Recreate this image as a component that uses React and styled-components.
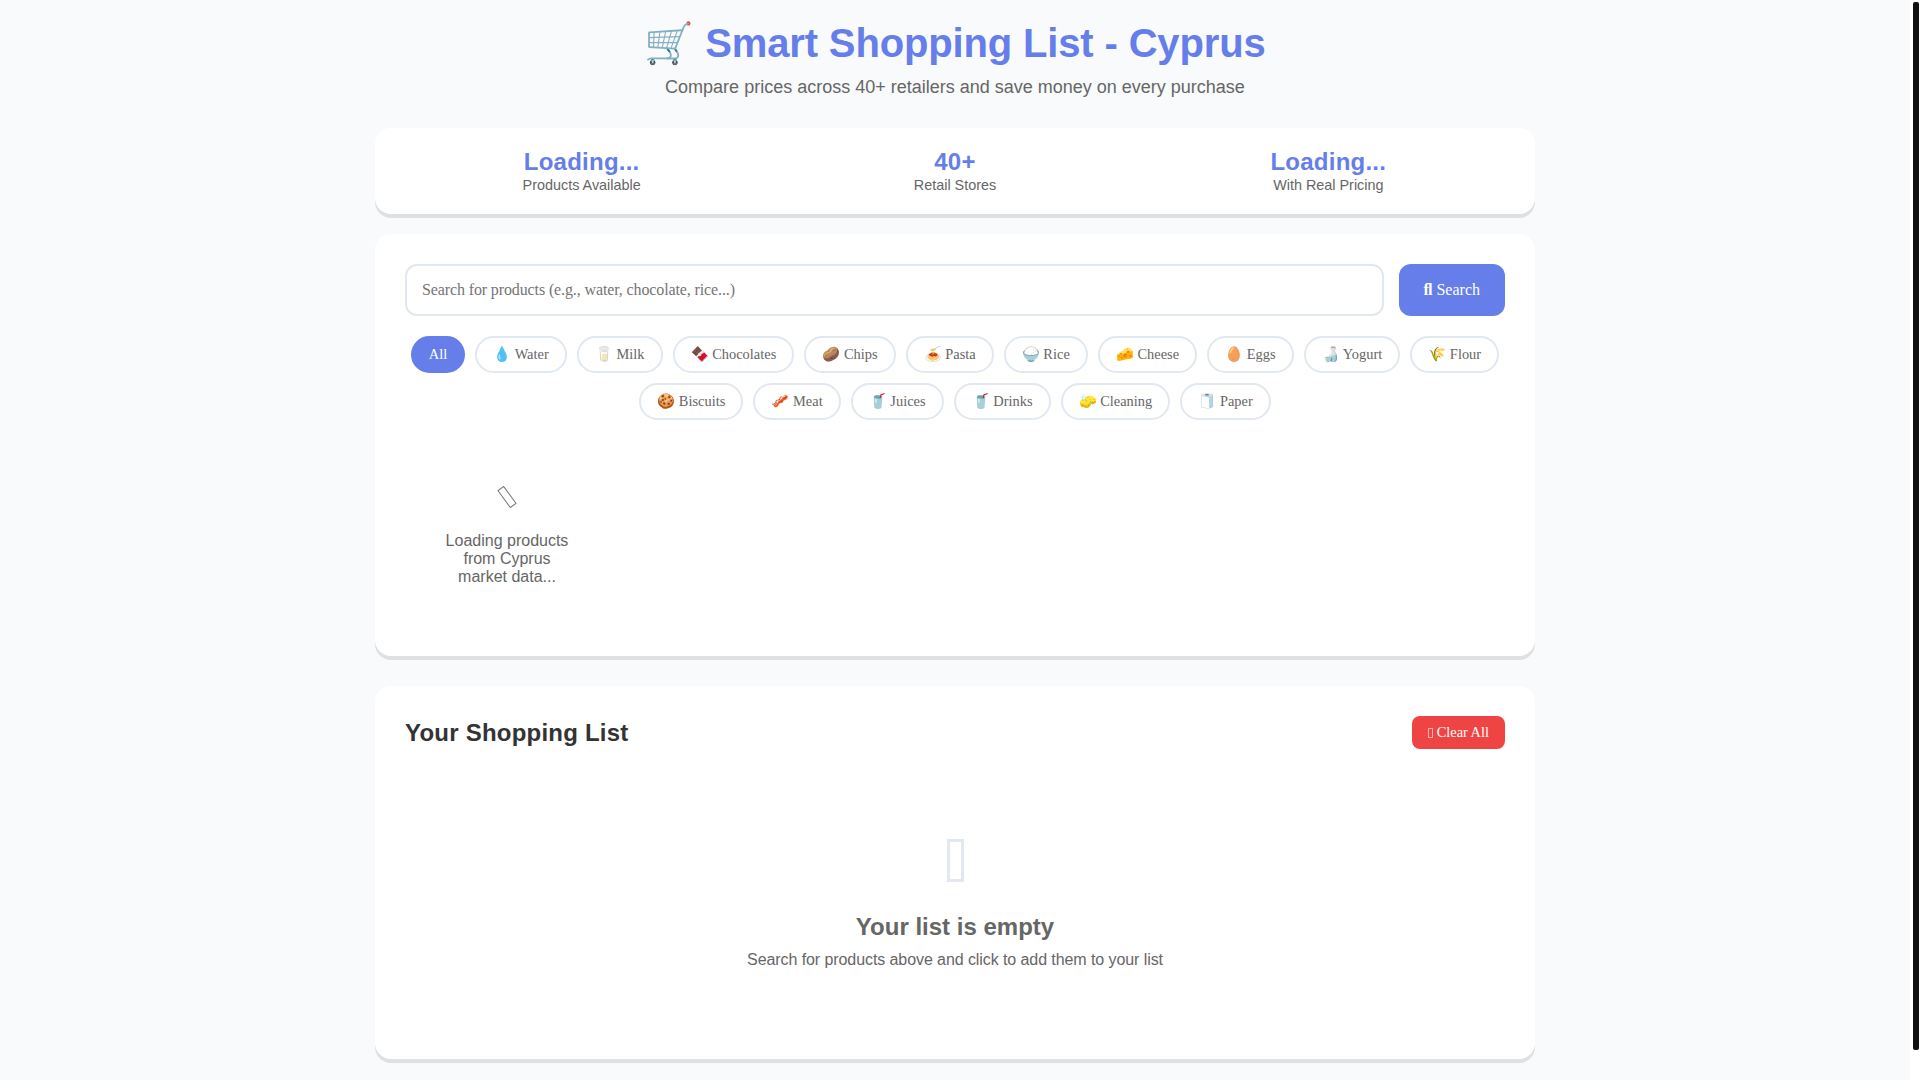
import styled, { createGlobalStyle } from "styled-components";

const GlobalStyle = createGlobalStyle`
  * {
    box-sizing: border-box;
    margin: 0;
    padding: 0;
  }

  html, body {
    height: 100%;
    overflow: hidden;
  }

  body {
    font-family: "Liberation Sans", Arial, sans-serif;
    background: #f8fafc;
    color: #333;
  }
`;

const Shell = styled.div`
  display: flex;
  height: 100vh;
`;

const Page = styled.div`
  flex: 1;
  min-width: 0;
  overflow: hidden;
`;

const ScrollRail = styled.div`
  flex: none;
  width: 10px;
  padding: 2px 1px 30px 3px;
  background: #fff;
`;

const ScrollThumb = styled.div`
  height: 100%;
  background: #111;
  border-radius: 2px;
`;

const Container = styled.div`
  max-width: 1200px;
  margin: 0 auto;
  padding: 20px;
`;

const Header = styled.header`
  text-align: center;
  margin-bottom: 30px;
`;

const Title = styled.h1`
  font-size: 40px;
  font-weight: 700;
  color: #667eea;
  margin-bottom: 10px;
  letter-spacing: -0.15px;
`;

const Subtitle = styled.p`
  font-size: 18px;
  color: #666;
`;

const Card = styled.section`
  background: #fff;
  border-radius: 16px;
  box-shadow: 0 4px 0 rgba(0, 0, 0, 0.1);
`;

const StatsCard = styled(Card)`
  display: grid;
  grid-template-columns: repeat(3, 1fr);
  padding: 20px 20px 21px;
  margin-bottom: 20px;
`;

const Stat = styled.div`
  text-align: center;
`;

const StatValue = styled.div`
  font-size: 24px;
  font-weight: 700;
  color: #667eea;
  margin-bottom: 1px;
  letter-spacing: 0.24px;
`;

const StatLabel = styled.div`
  font-size: 14.4px;
  color: #666;
`;

const SearchCard = styled(Card)`
  padding: 30px;
  margin-bottom: 30px;
`;

const SearchRow = styled.div`
  display: flex;
  gap: 15px;
  margin-bottom: 20px;
`;

const SearchInput = styled.input`
  flex: 1;
  padding: 15px;
  border: 2px solid #e2e8f0;
  border-radius: 12px;
  font-family: "Liberation Serif", "Times New Roman", serif;
  font-size: 16px;
  background: #fff;
  outline: none;

  &::placeholder {
    letter-spacing: -0.12px;
  }
`;

const SearchButton = styled.button`
  padding: 0 25px;
  border: none;
  border-radius: 12px;
  background: #667eea;
  color: #fff;
  font-family: "Liberation Serif", "Times New Roman", serif;
  font-size: 16px;
`;

const SearchGlyph = styled.span`
  font-weight: 900;
`;

const Filters = styled.div`
  display: flex;
  flex-wrap: wrap;
  justify-content: center;
  gap: 10px;
`;

const Chip = styled.button`
  padding: 8px 16px;
  border: 2px solid ${(p) => (p.$active ? "#667eea" : "#e2e8f0")};
  border-radius: 20px;
  background: ${(p) => (p.$active ? "#667eea" : "#fff")};
  color: ${(p) => (p.$active ? "#fff" : "#666")};
  font-family: "Liberation Serif", "Times New Roman", serif;
  font-size: 14.4px;
  letter-spacing: 0.02px;
`;

const ProductGrid = styled.div`
  display: grid;
  grid-template-columns: repeat(auto-fill, minmax(200px, 1fr));
  gap: 20px;
  margin-top: 20px;
`;

const Loading = styled.div`
  padding: 40px;
  text-align: center;
  color: #666;
`;

/* the icon font never loads in the original, so its icons show as empty boxes */
const SpinnerBox = styled.div`
  width: 8px;
  height: 22px;
  margin: 6px auto 24px;
  border: 1px solid #777;
  transform: rotate(-36deg);
`;

const ListCard = styled(Card)`
  padding: 30px;
`;

const ListHeader = styled.div`
  display: flex;
  justify-content: space-between;
  align-items: center;
  margin-bottom: 20px;
`;

const ListTitle = styled.h2`
  font-size: 24px;
  font-weight: 700;
  color: #333;
  letter-spacing: 0.22px;
`;

const ClearButton = styled.button`
  min-height: 33px;
  padding: 8px 16px;
  border: none;
  border-radius: 8px;
  background: #ef4444;
  color: #fff;
  font-family: "Liberation Serif", "Times New Roman", serif;
  font-size: 14.4px;
`;

const ClearBox = styled.span`
  display: inline-block;
  width: 5px;
  height: 10px;
  border: 1px solid rgba(255, 255, 255, 0.6);
  vertical-align: -1px;
`;

const Empty = styled.div`
  padding: 60px;
  text-align: center;
  color: #666;
`;

const EmptyBox = styled.div`
  width: 17px;
  height: 43px;
  margin: 10px auto 31px;
  border: 3px solid #e2e8f0;
`;

const EmptyTitle = styled.h3`
  font-size: 24px;
  font-weight: 700;
  margin-bottom: 10px;
`;

const EmptyText = styled.p`
  letter-spacing: -0.08px;
`;

const categories = [
  "💧 Water",
  "🥛 Milk",
  "🍫 Chocolates",
  "🥔 Chips",
  "🍝 Pasta",
  "🍚 Rice",
  "🧀 Cheese",
  "🥚 Eggs",
  "🍶 Yogurt",
  "🌾 Flour",
  "🍪 Biscuits",
  "🥓 Meat",
  "🥤 Juices",
  "🥤 Drinks",
  "🧽 Cleaning",
  "🧻 Paper",
];

const stats = [
  ["Loading...", "Products Available"],
  ["40+", "Retail Stores"],
  ["Loading...", "With Real Pricing"],
];

export default function App() {
  return (
    <Shell>
      <GlobalStyle />
      <Page>
        <Container>
          <Header>
            <Title>🛒 Smart Shopping List - Cyprus</Title>
            <Subtitle>Compare prices across 40+ retailers and save money on every purchase</Subtitle>
          </Header>

          <StatsCard>
            {stats.map(([value, label]) => (
              <Stat key={label}>
                <StatValue>{value}</StatValue>
                <StatLabel>{label}</StatLabel>
              </Stat>
            ))}
          </StatsCard>

          <SearchCard>
            <SearchRow>
              <SearchInput placeholder="Search for products (e.g., water, chocolate, rice...)" />
              <SearchButton>
                <SearchGlyph>ﬂ</SearchGlyph> Search
              </SearchButton>
            </SearchRow>
            <Filters>
              <Chip $active>All</Chip>
              {categories.map((name) => (
                <Chip key={name}>{name}</Chip>
              ))}
            </Filters>
            <ProductGrid>
              <Loading>
                <SpinnerBox />
                <p>Loading products from Cyprus market data...</p>
              </Loading>
            </ProductGrid>
          </SearchCard>

          <ListCard>
            <ListHeader>
              <ListTitle>Your Shopping List</ListTitle>
              <ClearButton>
                <ClearBox /> Clear All
              </ClearButton>
            </ListHeader>
            <Empty>
              <EmptyBox />
              <EmptyTitle>Your list is empty</EmptyTitle>
              <EmptyText>Search for products above and click to add them to your list</EmptyText>
            </Empty>
          </ListCard>
        </Container>
      </Page>
      <ScrollRail>
        <ScrollThumb />
      </ScrollRail>
    </Shell>
  );
}
